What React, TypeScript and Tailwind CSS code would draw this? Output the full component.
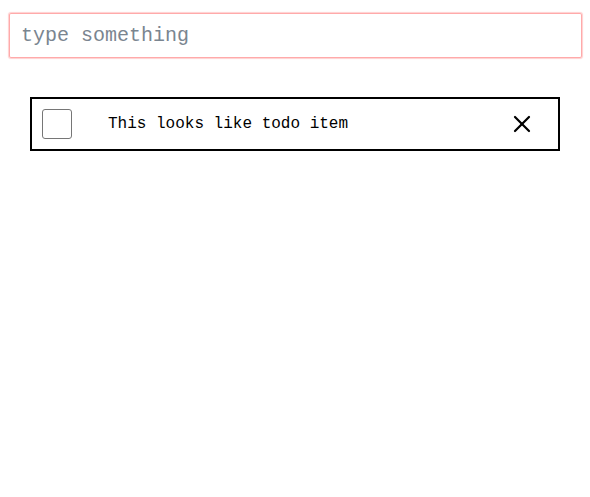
import { X } from 'lucide-react';

export default function App() {
  return (
    <div className="min-h-[497px] bg-white pt-[13px] pl-[9px]" style={{ fontFamily: '"Liberation Mono", "Courier New", monospace' }}>
      <div className="h-[45px] w-[573px] rounded-[2px] bg-white ring-1 ring-inset ring-[#ffaaaa] shadow-[0_0_1px_1px_#ffd0d0]">
        <input
          type="text"
          placeholder="type something"
          className="block h-full w-full border-0 bg-transparent px-[12px] text-[20px] text-black outline-none placeholder:text-[#7a8590]"
          style={{ fontFamily: '"Liberation Mono", "Courier New", monospace' }}
        />
      </div>
      <div className="ml-[21px] mt-[39px] flex h-[54px] w-[530px] items-center border-2 border-black pl-[10px] pr-[22px]">
        <div className="h-[30px] w-[30px] shrink-0 rounded-[3px] border border-[#767676] bg-white" />
        <span className="ml-[36px] flex-1 text-[16px] text-black">This looks like todo item</span>
        <X className="h-[28px] w-[28px] shrink-0 text-black" strokeWidth={1.9} />
      </div>
    </div>
  );
}
